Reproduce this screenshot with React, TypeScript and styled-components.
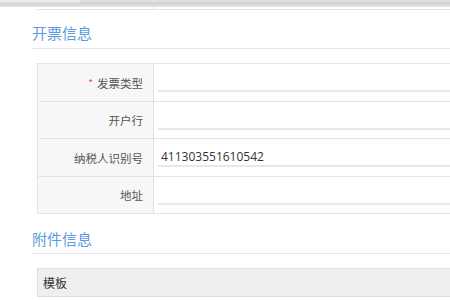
import styled, { createGlobalStyle } from 'styled-components';

const GlobalStyle = createGlobalStyle`
  html, body {
    margin: 0;
    padding: 0;
    background: #fff;
    overflow: hidden;
  }
  body {
    font-family: "Open Sans", "Noto Sans CJK SC", sans-serif;
    color: #333;
  }
`;

const ScrollStrip = styled.div`
  position: relative;
  height: 7px;
  background: linear-gradient(#e4e4e4, #d2d2d2 50%, #e6e6e6);
`;

const ScrollThumb = styled.div`
  position: absolute;
  left: 0;
  top: 0;
  width: 80px;
  height: 3px;
  background: linear-gradient(#f2f2f2, #e0e0e0);
`;

const Page = styled.div`
  padding-left: 32px;
`;

const PrevTableEnd = styled.div`
  margin-left: 5px;
  height: 2px;
  border-bottom: 1px solid #e3e3e3;
  display: flex;
`;

const PrevLabelCell = styled.div`
  width: 115px;
  border-right: 1px solid #e3e3e3;
`;

const SectionTitle = styled.h2<{ $top: number; $pad: number }>`
  margin: ${(p) => p.$top}px 0 0;
  padding-bottom: ${(p) => p.$pad}px;
  font-size: 15px;
  line-height: 18px;
  font-weight: normal;
  color: #5b9be0;
  border-bottom: 1px solid #e6e6e6;
`;

const FormTable = styled.div`
  margin: 14px 0 0 5px;
  border-top: 1px solid #e3e3e3;
  border-left: 1px solid #e3e3e3;
`;

const Row = styled.div<{ $h: number }>`
  display: flex;
  height: ${(p) => p.$h}px;
  border-bottom: 1px solid #e3e3e3;
`;

const LabelCell = styled.div`
  width: 105px;
  padding-right: 10px;
  background: #f7f7f7;
  border-right: 1px solid #e3e3e3;
  display: flex;
  align-items: center;
  justify-content: flex-end;
  font-size: 11.5px;
  color: #555;
  font-family: "Noto Sans CJK SC", sans-serif;
`;

const Required = styled.span`
  color: #e64c4c;
  margin-right: 4px;
  font-size: 10px;
`;

const ValueCell = styled.div`
  flex: 1;
  padding: 2px 0 0 4px;
`;

const Field = styled.div`
  height: 16px;
  padding: 8px 3px 0;
  border-bottom: 2px solid #e8e8e8;
  font-size: 12px;
  line-height: 16px;
  color: #333;
`;

const AttachTable = styled.div`
  margin: 14px 0 0 5px;
  border: 1px solid #dedede;
  border-right: none;
`;

const AttachHead = styled.div`
  height: 27px;
  padding-left: 5px;
  background: #efefef;
  display: flex;
  align-items: center;
  font-size: 12px;
  color: #333;
  font-family: "Noto Sans CJK SC", sans-serif;
`;

const rows = [
  { label: '发票类型', value: '', required: true, h: 37 },
  { label: '开户行', value: '', h: 36 },
  { label: '纳税人识别号', value: '411303551610542', h: 37 },
  { label: '地址', value: '', h: 36 },
];

export default function App() {
  return (
    <>
      <GlobalStyle />
      <ScrollStrip>
        <ScrollThumb />
      </ScrollStrip>
      <Page>
        <PrevTableEnd>
          <PrevLabelCell />
        </PrevTableEnd>
        <SectionTitle $top={14} $pad={6}>开票信息</SectionTitle>
        <FormTable>
          {rows.map((r) => (
            <Row key={r.label} $h={r.h}>
              <LabelCell>
                {r.required && <Required>*</Required>}
                {r.label}
              </LabelCell>
              <ValueCell>
                <Field>{r.value}</Field>
              </ValueCell>
            </Row>
          ))}
        </FormTable>
        <SectionTitle $top={16} $pad={5}>附件信息</SectionTitle>
        <AttachTable>
          <AttachHead>模板</AttachHead>
        </AttachTable>
      </Page>
    </>
  );
}
